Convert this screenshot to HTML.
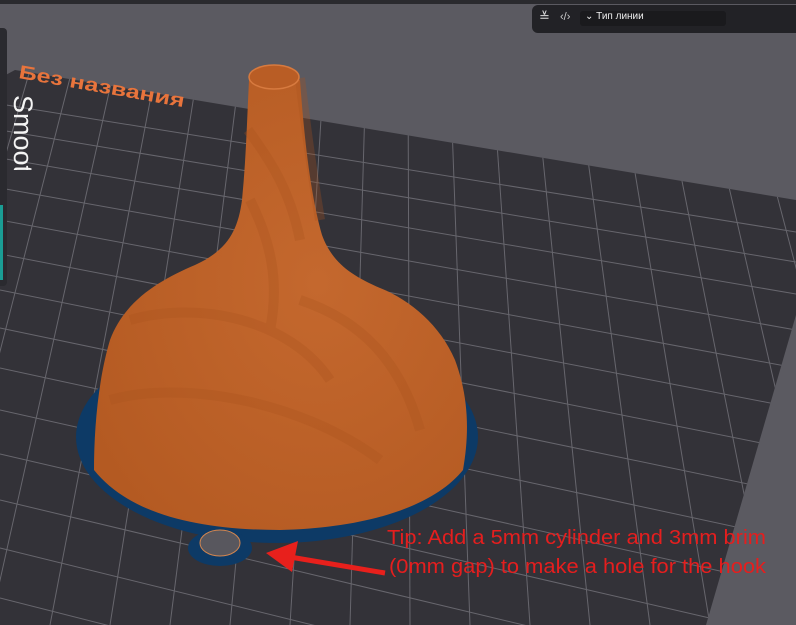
<!DOCTYPE html>
<html><head><meta charset="utf-8"><style>
html,body{margin:0;padding:0;width:796px;height:625px;overflow:hidden;background:#5b5a61;font-family:"Liberation Sans","Noto Sans CJK JP",sans-serif}
</style></head><body>
<svg width="796" height="625" viewBox="0 0 796 625" style="position:absolute;left:0;top:0;display:block">
<defs>
<clipPath id="plate"><polygon points="0,78 15,70 796,200 796,315 706,625 0,625"/></clipPath>
<radialGradient id="og" cx="0.6" cy="0.45" r="0.7"><stop offset="0" stop-color="#c4682e"/><stop offset="1" stop-color="#b45a22"/></radialGradient>
</defs>
<rect x="0" y="0" width="796" height="4" fill="#2a2a2e"/>
<polygon points="0,78 15,70 796,200 796,315 706,625 0,625" fill="#333238"/>
<g clip-path="url(#plate)" stroke="#67666d" stroke-width="1" fill="none">
<line x1="0" y1="104" x2="796" y2="232"/>
<line x1="0" y1="130" x2="796" y2="262"/>
<line x1="0" y1="158" x2="796" y2="294"/>
<line x1="0" y1="188" x2="796" y2="330"/>
<line x1="0" y1="220" x2="796" y2="368"/>
<line x1="0" y1="254" x2="796" y2="408"/>
<line x1="0" y1="290" x2="796" y2="450"/>
<line x1="0" y1="328" x2="796" y2="494"/>
<line x1="0" y1="368" x2="796" y2="540"/>
<line x1="0" y1="410" x2="796" y2="588"/>
<line x1="0" y1="454" x2="796" y2="638"/>
<line x1="0" y1="500" x2="796" y2="690"/>
<line x1="0" y1="548" x2="796" y2="744"/>
<line x1="0" y1="598" x2="796" y2="800"/>
<line x1="30" y1="70" x2="-130" y2="625"/>
<line x1="72" y1="70" x2="-70" y2="625"/>
<line x1="114" y1="70" x2="-10" y2="625"/>
<line x1="156" y1="70" x2="50" y2="625"/>
<line x1="198" y1="70" x2="110" y2="625"/>
<line x1="240" y1="70" x2="170" y2="625"/>
<line x1="282" y1="70" x2="230" y2="625"/>
<line x1="324" y1="70" x2="290" y2="625"/>
<line x1="366" y1="70" x2="350" y2="625"/>
<line x1="408" y1="70" x2="410" y2="625"/>
<line x1="450" y1="70" x2="470" y2="625"/>
<line x1="492" y1="70" x2="530" y2="625"/>
<line x1="534" y1="70" x2="590" y2="625"/>
<line x1="576" y1="70" x2="650" y2="625"/>
<line x1="618" y1="70" x2="710" y2="625"/>
<line x1="660" y1="70" x2="770" y2="625"/>
<line x1="702" y1="70" x2="830" y2="625"/>
<line x1="744" y1="70" x2="890" y2="625"/>
<line x1="786" y1="70" x2="950" y2="625"/>
</g>
<ellipse cx="277" cy="437" rx="201" ry="106" fill="#0d3a66"/>
<ellipse cx="220" cy="548" rx="32" ry="18" fill="#0d3a66"/>
<ellipse cx="220" cy="543" rx="20" ry="13" fill="#58575e" stroke="#d4864f" stroke-width="1"/>
<path d="M249,80 C247,120 246,160 242,200 C238,230 228,250 195,265 C160,280 125,300 110,340 C98,380 94,430 94,470 C130,515 200,530 280,530 C370,528 435,505 463,470 C470,430 468,395 455,360 C440,325 410,300 380,288 C350,275 332,262 322,235 C312,200 305,150 300,80 Z" fill="url(#og)"/>
<path d="M300,78 C305,120 310,160 320,220 M248,130 C270,160 290,190 300,240 M250,200 C270,240 280,280 270,330 M130,320 C200,300 290,320 330,380 M110,400 C180,380 300,400 380,460 M300,300 C360,320 400,360 420,430" stroke="#a9521d" stroke-width="10" fill="none" opacity="0.3"/>
<ellipse cx="274" cy="77" rx="25" ry="12" fill="#b95d25" stroke="#d77a3f" stroke-width="1.5"/>
<line x1="385" y1="573" x2="290" y2="557" stroke="#e8201c" stroke-width="5"/>
<polygon points="266,553 298,541 292,572" fill="#e8201c"/>
<text x="18" y="78" transform="rotate(10 18 78)" font-family="Liberation Sans" font-weight="bold" font-size="19" fill="#e8743c" textLength="168" lengthAdjust="spacingAndGlyphs">Без названия</text>
<text x="387" y="544" font-family="Liberation Sans" font-size="20" fill="#e51e1e" textLength="379" lengthAdjust="spacingAndGlyphs">Tip: Add a 5mm cylinder and 3mm brim</text>
<text x="389" y="573" font-family="Liberation Sans" font-size="20" fill="#e51e1e" textLength="377" lengthAdjust="spacingAndGlyphs">(0mm gap) to make a hole for the hook</text>
</svg>
<div style="position:absolute;left:0;top:28px;width:7px;height:258px;background:#2a2a2f;border-radius:0 4px 4px 0"></div>
<div style="position:absolute;left:0;top:205px;width:3px;height:75px;background:#1a9d94"></div>
<svg width="60" height="200" style="position:absolute;left:0;top:0">
<clipPath id="sm2"><rect x="0" y="90" width="60" height="80"/></clipPath>
<g clip-path="url(#sm2)">
<text x="14" y="95" transform="rotate(90 14 95)" font-family="Liberation Sans" font-size="27" fill="#f4f4f4">Smooth</text></g>
</svg>
<div style="position:absolute;left:532px;top:5px;width:264px;height:28px;background:#222226;border-radius:6px 0 0 6px"></div>
<div style="position:absolute;left:539px;top:9px;color:#ddd;font-size:13px">≚</div>
<div style="position:absolute;left:560px;top:11px;color:#ccc;font-size:11px">‹/›</div>
<div style="position:absolute;left:580px;top:11px;width:146px;height:15px;background:#1a1a1d;border-radius:3px"></div>
<div style="position:absolute;left:585px;top:11px;color:#eee;font-size:10px">⌄ Тип линии</div>
</body></html>
